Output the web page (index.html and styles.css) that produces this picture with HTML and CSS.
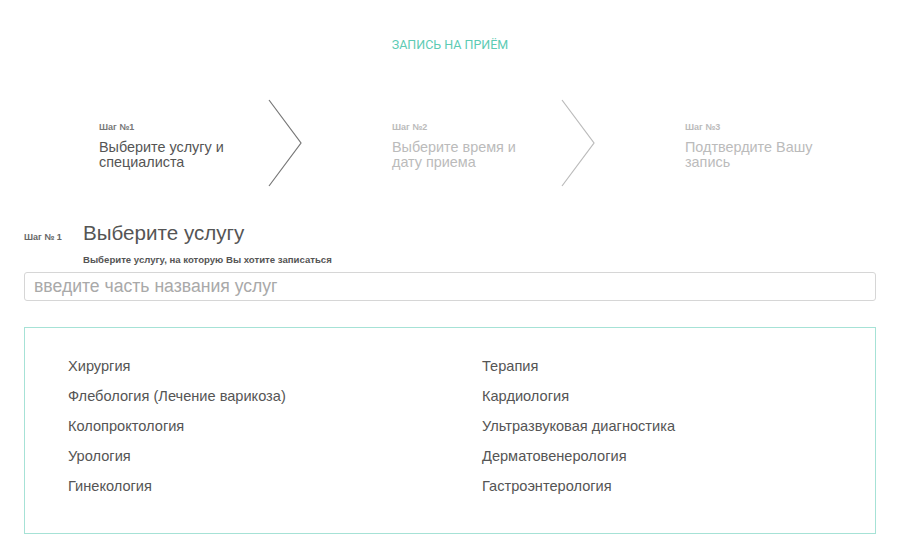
FILE: index.html
```html
<!DOCTYPE html>
<html lang="ru">
<head>
<meta charset="utf-8">
<title>Запись на приём</title>
<link rel="stylesheet" href="styles.css">
</head>
<body>
<div class="page">
  <div class="page-title">ЗАПИСЬ НА ПРИЁМ</div>
  <div class="steps">
    <div class="step step-active">
      <div class="step-text">
        <div class="step-num">Шаг №1</div>
        <div class="step-name">Выберите услугу и специалиста</div>
      </div>
      <svg class="chevron" width="34" height="88" viewBox="0 0 34 88"><polyline points="1,1 33,44 1,87" fill="none" stroke="currentColor" stroke-width="1.2"/></svg>
    </div>
    <div class="step">
      <div class="step-text">
        <div class="step-num">Шаг №2</div>
        <div class="step-name">Выберите время и дату приема</div>
      </div>
      <svg class="chevron" width="34" height="88" viewBox="0 0 34 88"><polyline points="1,1 33,44 1,87" fill="none" stroke="currentColor" stroke-width="1.2"/></svg>
    </div>
    <div class="step step-last">
      <div class="step-text">
        <div class="step-num">Шаг №3</div>
        <div class="step-name">Подтвердите Вашу запись</div>
      </div>
    </div>
  </div>

  <div class="section">
    <div class="section-head">
      <div class="section-step">Шаг № 1</div>
      <div class="section-title">Выберите услугу</div>
    </div>
    <div class="section-sub">Выберите услугу, на которую Вы хотите записаться</div>
    <input class="search" type="text" placeholder="введите часть названия услуг">
    <div class="services">
      <div class="service">Хирургия</div>
      <div class="service">Флебология (Лечение варикоза)</div>
      <div class="service">Колопроктология</div>
      <div class="service">Урология</div>
      <div class="service">Гинекология</div>
      <div class="service">Терапия</div>
      <div class="service">Кардиология</div>
      <div class="service">Ультразвуковая диагностика</div>
      <div class="service">Дерматовенерология</div>
      <div class="service">Гастроэнтерология</div>
    </div>
  </div>
</div>
</body>
</html>
```

FILE: styles.css
```css
* { box-sizing: border-box; }
html, body { margin: 0; padding: 0; background: #fff; }
body {
  font-family: "Liberation Sans", Arial, sans-serif;
  color: #555;
}
.page { width: 900px; }
.page-title {
  padding-top: 38px;
  text-align: center;
  font-family: Roboto, "Liberation Sans", sans-serif;
  font-weight: 400;
  font-size: 12.5px;
  line-height: 14px;
  color: #5ccbb4;
}
.steps {
  display: flex;
  margin-top: 47px;
  padding-left: 99px;
}
.step {
  display: flex;
  align-items: center;
  flex: none;
  width: 293px;
  color: #bbb;
}
.step-last { width: auto; }
.step-active { color: #777; }
.step-text { width: 145px; padding-top: 5px; }
.step-num {
  font-size: 9px;
  font-weight: bold;
  line-height: 11px;
  margin-bottom: 7px;
}
.step-name {
  font-size: 14.4px;
  line-height: 15px;
}
.step-active .step-name { color: #555; }
.chevron { display: block; margin-left: 24px; flex: none; }
.section { padding: 0 24px; margin-top: 34px; }
.section-head { display: flex; align-items: baseline; }
.section-step {
  width: 59px;
  font-size: 9px;
  font-weight: bold;
  color: #666;
}
.section-title {
  font-size: 20.6px;
  line-height: 24px;
  color: #555;
}
.section-sub {
  margin-top: 9px;
  margin-left: 59px;
  font-size: 9.6px;
  line-height: 12px;
  font-weight: bold;
  color: #555;
}
.search {
  display: block;
  width: 100%;
  height: 29px;
  margin-top: 6px;
  padding: 0 9px;
  border: 1px solid #d6d6d6;
  border-radius: 3px;
  font-family: "Liberation Sans", Arial, sans-serif;
  font-size: 17.6px;
  color: #555;
  outline: none;
}
.search::placeholder { color: #a9a9a9; }
.services {
  margin-top: 26px;
  border: 1px solid #a6e2d6;
  height: 207px;
  padding: 23px 0 0 43px;
  display: grid;
  grid-template-columns: 414px 1fr;
  grid-template-rows: repeat(5, 30px);
  grid-auto-flow: column;
}
.service {
  font-size: 14.6px;
  line-height: 30px;
  color: #555;
}
```
